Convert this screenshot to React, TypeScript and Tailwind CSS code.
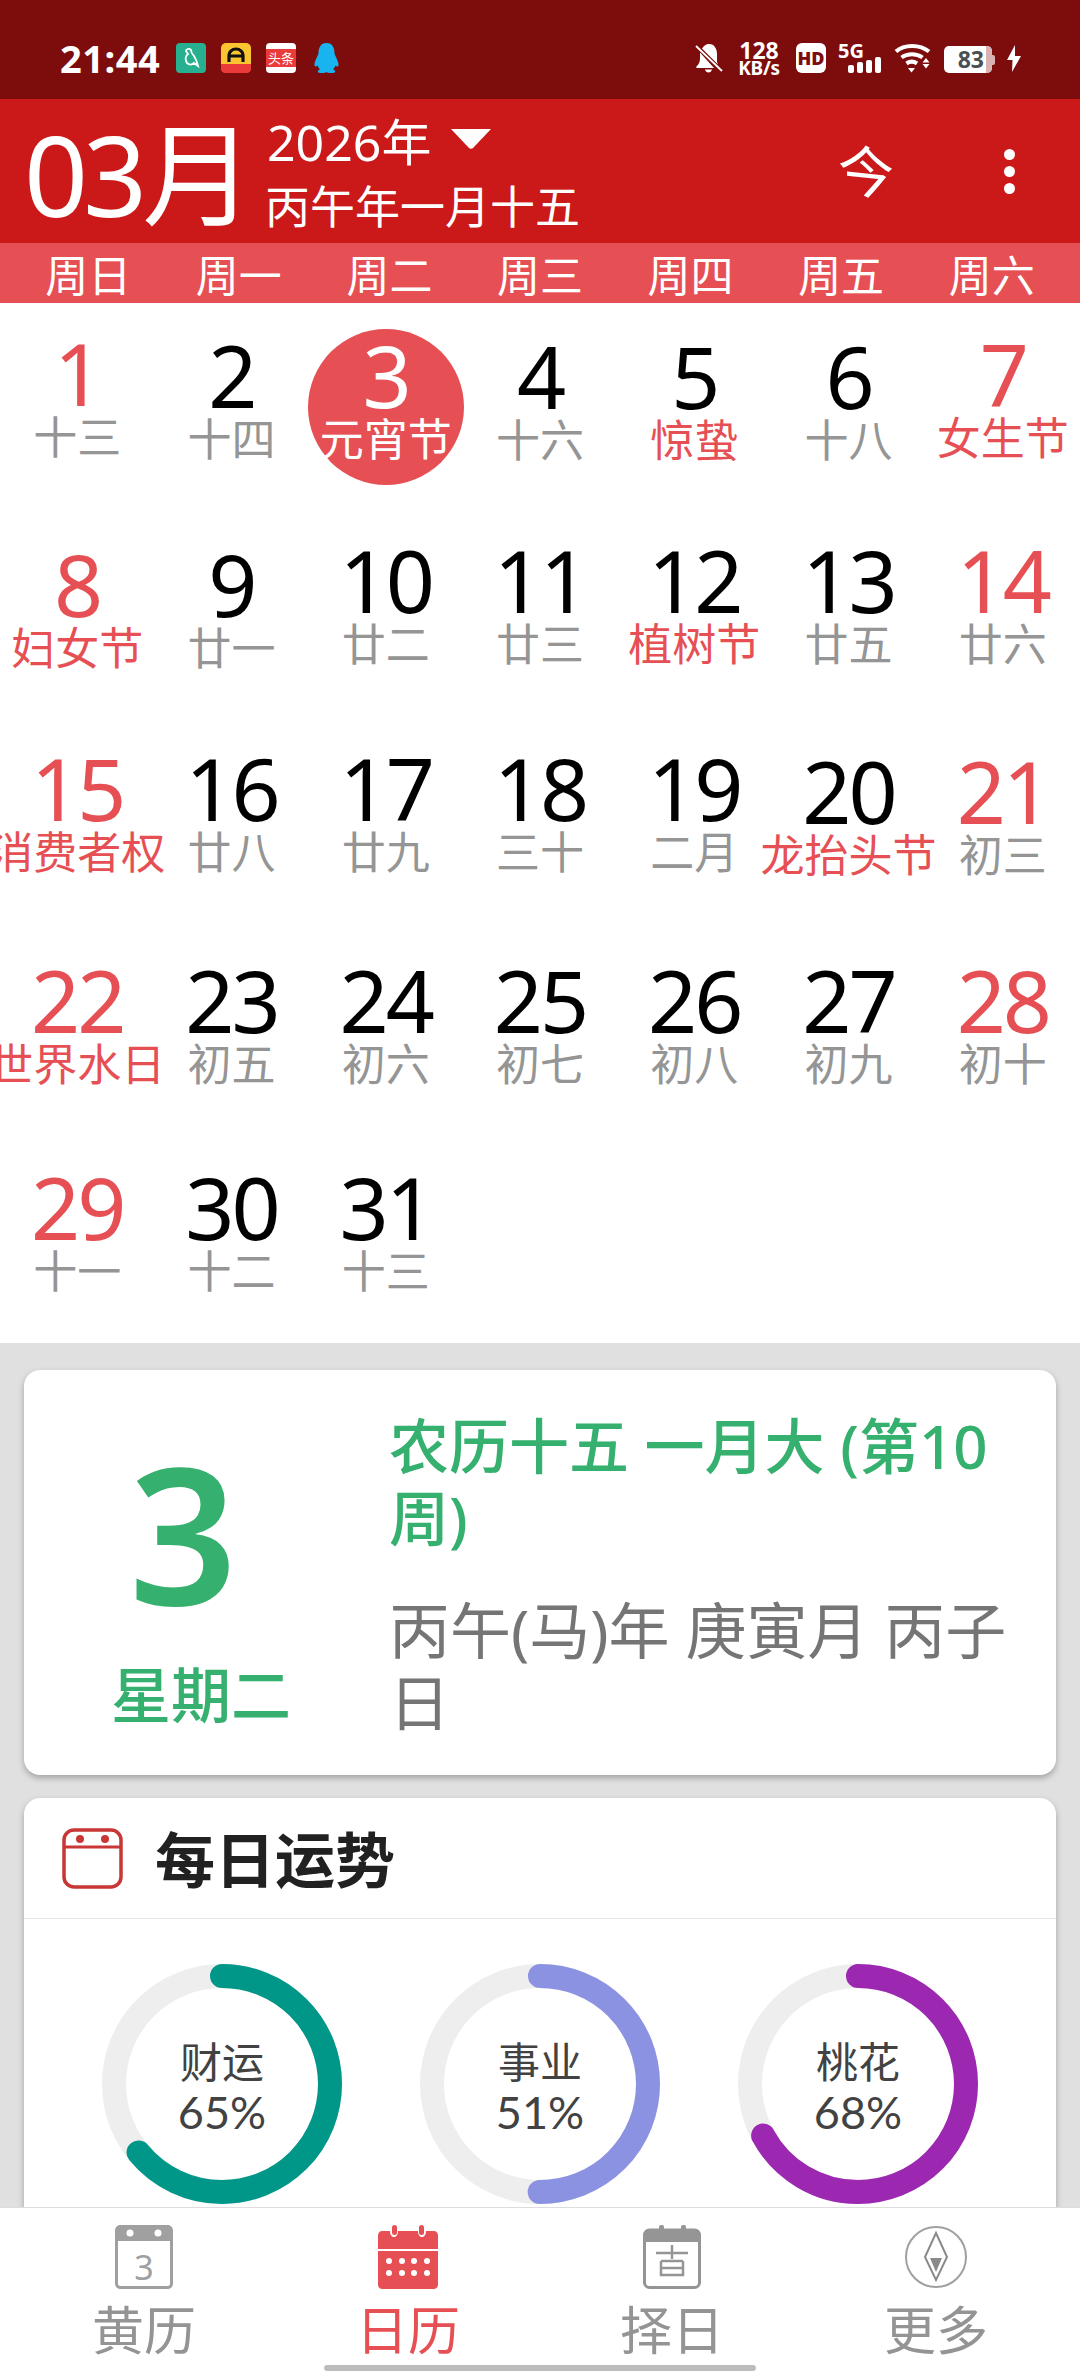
import React from 'react';

type Day = { d: number; l: string; red?: boolean; fest?: boolean; today?: boolean; pt: string };

const days: Day[] = [
  { d: 1, l: '十三', red: true, pt: 'pt-[32px]' },
  { d: 2, l: '十四', pt: 'pt-[34px]' },
  { d: 3, l: '元宵节', today: true, pt: 'pt-[34px]' },
  { d: 4, l: '十六', pt: 'pt-[35px]' },
  { d: 5, l: '惊蛰', fest: true, pt: 'pt-[35px]' },
  { d: 6, l: '十八', pt: 'pt-[35px]' },
  { d: 7, l: '女生节', red: true, fest: true, pt: 'pt-[33px]' },
  { d: 8, l: '妇女节', red: true, fest: true, pt: 'pt-[35px]' },
  { d: 9, l: '廿一', pt: 'pt-[35px]' },
  { d: 10, l: '廿二', pt: 'pt-[31px]' },
  { d: 11, l: '廿三', pt: 'pt-[31px]' },
  { d: 12, l: '植树节', fest: true, pt: 'pt-[31px]' },
  { d: 13, l: '廿五', pt: 'pt-[31px]' },
  { d: 14, l: '廿六', red: true, pt: 'pt-[31px]' },
  { d: 15, l: '消费者权', red: true, fest: true, pt: 'pt-[31px]' },
  { d: 16, l: '廿八', pt: 'pt-[31px]' },
  { d: 17, l: '廿九', pt: 'pt-[31px]' },
  { d: 18, l: '三十', pt: 'pt-[31px]' },
  { d: 19, l: '二月', pt: 'pt-[31px]' },
  { d: 20, l: '龙抬头节', fest: true, pt: 'pt-[34px]' },
  { d: 21, l: '初三', red: true, pt: 'pt-[34px]' },
  { d: 22, l: '世界水日', red: true, fest: true, pt: 'pt-[35px]' },
  { d: 23, l: '初五', pt: 'pt-[35px]' },
  { d: 24, l: '初六', pt: 'pt-[35px]' },
  { d: 25, l: '初七', pt: 'pt-[35px]' },
  { d: 26, l: '初八', pt: 'pt-[35px]' },
  { d: 27, l: '初九', pt: 'pt-[35px]' },
  { d: 28, l: '初十', red: true, pt: 'pt-[35px]' },
  { d: 29, l: '十一', red: true, pt: 'pt-[34px]' },
  { d: 30, l: '十二', pt: 'pt-[34px]' },
  { d: 31, l: '十三', pt: 'pt-[34px]' },
];

const weekdays = ['周日', '周一', '周二', '周三', '周四', '周五', '周六'];

const rings = [
  { name: '财运', pct: 65, color: '#009688' },
  { name: '事业', pct: 51, color: '#8c92e2' },
  { name: '桃花', pct: 68, color: '#9c27b0' },
];

const StatusBar = () => (
  <div className="h-[99px] bg-[#7d0d0d] flex items-center text-white pt-[17px] shrink-0">
    <div className="ml-[60px] text-[38px] font-bold leading-none tracking-[0.5px] w-[116px]">21:44</div>
    <div className="flex items-center gap-[15px]">
      <svg width="30" height="30" viewBox="0 0 30 30">
        <rect width="30" height="30" rx="4" fill="#26b08f" />
        <path d="M10 8c0-2 3-3 5-1 0 3 1 4 3 6 2 3 3 6 4 10l-4-3c-2 2-5 2-7 0-2-3-2-7 1-9z" fill="none" stroke="#fff" strokeWidth="1.800" />
      </svg>
      <svg width="30" height="30" viewBox="0 0 30 30">
        <rect width="30" height="30" rx="5" fill="#fbc531" />
        <path d="M0 21h30v4c0 3-2 5-5 5H5c-3 0-5-2-5-5z" fill="#ea3a3a" />
        <path d="M8 19v-7c0-3 3-6 7-6s7 3 7 6v7M8 13h14" fill="none" stroke="#111" strokeWidth="3.200" />
      </svg>
      <div className="w-[30px] h-[30px] rounded-[4px] bg-white flex items-center overflow-hidden">
        <div className="w-full h-[18px] bg-[#ea3a3a] text-white text-[13px] leading-[18px] text-center whitespace-nowrap">头条</div>
      </div>
      <svg className="ml-[2px]" width="27" height="30" viewBox="0 0 27 30">
        <path d="M13.500 0C7.500 0 5.500 5 5.500 10c0 2-3.500 7-4 11-.3 3 1.500 3 3 1.500.5 1.500 1.500 3 2.500 3.800-1.500.7-2.500 1.500-2 2.700 1 1.500 7 1.200 8.500 0 1.500 1.200 7.500 1.500 8.500 0 .5-1.200-.5-2-2-2.700 1-.8 2-2.300 2.500-3.800 1.500 1.500 3.300 1.500 3-1.500-.5-4-4-9-4-11 0-5-2-10-8-10z" fill="#18b4f0" />
      </svg>
    </div>

    <div className="ml-auto mr-[59px] flex items-center">
      <svg width="28" height="30" viewBox="0 0 28 30" fill="#fff">
        <path d="M7 5.500C8.800 2.800 11 1 14 1c5.500 0 8 5 8 10v8l1 2.500zM5 9.500 19 25H2c-1 0-1-1-.5-1.500C4 21 5 19 5 15zM10 26.500h7c-.5 2-2 3-3.500 3s-3-1-3.500-3z" />
        <path d="M1 3 27 28" stroke="#fff" strokeWidth="1.800" />
      </svg>
      <div className="w-[44px] ml-[14px] flex flex-col items-center font-bold">
        <div className="text-[23px] leading-[20px]">128</div>
        <div className="text-[19px] leading-[17px] tracking-[-0.3px] whitespace-nowrap">KB/s</div>
      </div>
      <div className="ml-[15px] w-[30px] h-[30px] rounded-[6px] bg-white flex items-center justify-center text-[#7d0d0d] text-[18px] font-black leading-none">HD</div>
      <div className="ml-[12px] w-[45px] h-[30px] relative">
        <div className="absolute left-0 top-0 text-[20px] leading-[16px] font-bold">5G</div>
        <div className="absolute left-[10px] bottom-0 flex items-end gap-[3px]">
          <div className="w-[6px] h-[8px] rounded-[2px] bg-white" />
          <div className="w-[6px] h-[11px] rounded-[2px] bg-white" />
          <div className="w-[6px] h-[13px] rounded-[2px] bg-white" />
          <div className="w-[6px] h-[16px] rounded-[2px] bg-white" />
        </div>
      </div>
      <svg className="ml-[11px]" width="38" height="30" viewBox="0 0 38 30" fill="none" stroke="#fff" strokeWidth="4">
        <path d="M2 8.500C10 1 26 1 35 8.500" />
        <path d="M7.500 14.500c6-4.500 15-4.500 21 0" />
        <path d="M12.500 20.500c3.500-2.500 7-2.500 10.500 0" />
        <path d="M14 25h7l-3.500 4.500z" fill="#fff" stroke="none" />
        <path d="M32 15l3.500 4.500h-7zM28.500 21h7L32 25.500z" fill="#fff" stroke="none" />
      </svg>
      <div className="ml-[12px] w-[51px] h-[27px] mt-[3px] flex items-center">
        <div className="w-[48px] h-[27px] rounded-[5px] overflow-hidden flex bg-white">
          <div className="w-[40px] text-[#4a4f52] text-[23px] font-bold leading-[27px] text-right">83</div>
          <div className="w-[6px] ml-auto bg-[#d9b3b3]" />
        </div>
        <div className="w-[3px] h-[10px] bg-[#d9b3b3] rounded-r-[2px]" />
      </div>
      <svg className="ml-[12px]" width="14" height="27" viewBox="0 0 14 27" fill="#fff">
        <path d="M8 0 0 15h5.500L5 27l9-16H8z" />
      </svg>
    </div>
  </div>
);

const Header = () => (
  <div className="h-[144px] bg-[#cb1818] flex items-center text-white shrink-0">
    <div className="ml-[24px] w-[243px] text-[112px] leading-none whitespace-nowrap tracking-[-5px] pt-[5px]">03月</div>
    <div className="flex flex-col pt-[7px]">
      <div className="flex items-center h-[56px]">
        <span className="text-[50px] leading-none">2026年</span>
        <svg className="ml-[20px] mb-[6px]" width="40" height="20" viewBox="0 0 40 20">
          <path d="M0 0h40L22 19c-1 1-3 1-4 0z" fill="#fff" />
        </svg>
      </div>
      <div className="text-[45px] leading-[58px] whitespace-nowrap pt-[8px] -ml-[2px]">丙午年一月十五</div>
    </div>
    <div className="ml-auto mr-[65px] flex items-center">
      <span className="text-[56px] leading-none mr-[110px] skew-y-[6deg]">今</span>
      <div className="flex flex-col gap-[6px]">
        <div className="w-[11px] h-[11px] rounded-full bg-white" />
        <div className="w-[11px] h-[11px] rounded-full bg-white" />
        <div className="w-[11px] h-[11px] rounded-full bg-white" />
      </div>
    </div>
  </div>
);

const WeekRow = () => (
  <div className="h-[60px] bg-[#e65054] grid grid-cols-7 px-[13px] text-white text-[43px] leading-[66px] text-center shrink-0">
    {weekdays.map((w) => (
      <div key={w} className="h-[60px]">{w}</div>
    ))}
  </div>
);

const Cell = ({ day }: { day: Day }) => {
  const numColor = day.today ? 'text-white' : day.red ? 'text-[#e65054]' : 'text-black';
  const lunarColor = day.today ? 'text-white' : day.fest ? 'text-[#e65054]' : 'text-[#959595]';
  return (
    <div className={`h-[208px] relative flex flex-col items-center ${day.pt}`}>
      {day.today && <div className="absolute left-[-1px] top-[26px] w-[156px] h-[156px] rounded-full bg-[#e65054]" />}
      <div className={`relative text-[86px] leading-[76px] tracking-[-3px] ${numColor}`}>{day.d}</div>
      <div className={`relative text-[44px] leading-[40px] mt-[6px] whitespace-nowrap ${lunarColor}`}>{day.l}</div>
    </div>
  );
};

const Ring = ({ name, pct, color }: { name: string; pct: number; color: string }) => {
  const r = 108;
  const c = 2 * Math.PI * r;
  // the arc in the app stops a bit short of its label value
  const sweep = ((pct - 1) / 100) * c;
  return (
    <div className="relative w-[240px] h-[240px] mx-auto">
      <svg width="240" height="240" viewBox="0 0 240 240">
        <circle cx="120" cy="120" r={r} fill="none" stroke="#eeeeee" strokeWidth="24" />
        <circle
          cx="120"
          cy="120"
          r={r}
          fill="none"
          stroke={color}
          strokeWidth="24"
          strokeLinecap="round"
          strokeDasharray={`${sweep} ${c}`}
          transform="rotate(-90 120 120)"
        />
      </svg>
      <div className="absolute inset-0 flex flex-col items-center justify-center pt-[5px] text-[#424242]">
        <div className="text-[42px] leading-[51px]">{name}</div>
        <div className="text-[45px] leading-[51px] font-['Lato','Noto_Sans',sans-serif]">{pct}%</div>
      </div>
    </div>
  );
};

const Cards = () => (
  <div className="flex-1 bg-[#e0e0e0] overflow-hidden px-[24px] pt-[27px] min-h-0">
    <div className="h-[405px] bg-white rounded-[16px] shadow-[0_3px_6px_rgba(0,0,0,0.28)] flex">
      <div className="w-[354px] shrink-0 flex flex-col items-center pt-[62px]">
        <div className="text-[190px] leading-[200px] font-semibold text-[#35b06e] mr-[36px]">3</div>
        <div className="text-[60px] leading-[72px] font-medium text-[#35b06e] mt-[27px]">星期二</div>
      </div>
      <div className="ml-[11px] w-[640px] pt-[40px]">
        <div className="text-[60px] leading-[72px] font-medium text-[#35b06e]">农历十五 一月大 (第10周)</div>
        <div className="text-[61px] leading-[72px] text-[#757575] mt-[41px]">丙午(马)年 庚寅月 丙子日</div>
      </div>
    </div>
    <div className="mt-[23px] bg-white rounded-t-[16px] shadow-[0_3px_6px_rgba(0,0,0,0.28)] h-[500px]">
      <div className="h-[121px] flex items-center border-b border-[#e8e8e8] pl-[38px]">
        <svg width="61" height="61" viewBox="0 0 61 61" fill="none">
          <rect x="2" y="2" width="57" height="57" rx="10" stroke="#c93636" strokeWidth="3.500" />
          <path d="M2 19h57" stroke="#c93636" strokeWidth="3" />
          <circle cx="18" cy="11" r="4" fill="#c93636" />
          <circle cx="43" cy="11" r="4" fill="#c93636" />
        </svg>
        <span className="ml-[32px] mt-[4px] text-[60px] leading-none font-bold text-[#212121]">每日运势</span>
      </div>
      <div className="grid grid-cols-3 px-[39px] pt-[45px]">
        {rings.map((r) => (
          <Ring key={r.name} {...r} />
        ))}
      </div>
    </div>
  </div>
);

const BottomNav = () => (
  <div className="h-[169px] bg-white border-t border-[#dddddd] grid grid-cols-4 px-[12px] relative shrink-0">
    <div className="flex flex-col items-center pt-[17px] text-[#949494]">
      <svg width="58" height="64" viewBox="0 0 58 64" fill="none">
        <rect x="1.500" y="1.500" width="55" height="61" rx="4" stroke="#a0a0a0" strokeWidth="3" />
        <path d="M1 5c0-3 2-5 5-5h46c3 0 5 2 5 5v11H1z" fill="#a0a0a0" />
        <circle cx="15" cy="8" r="3.500" fill="#fff" />
        <circle cx="43" cy="8" r="3.500" fill="#fff" />
        <text x="29" y="55" textAnchor="middle" fontSize="34" fill="#a0a0a0">3</text>
      </svg>
      <div className="text-[52px] leading-[70px] mt-[6px]">黄历</div>
    </div>
    <div className="flex flex-col items-center pt-[17px] text-[#e65054]">
      <svg width="60" height="64" viewBox="0 0 60 64">
        <path d="M0 10c0-2 2-4 4-4h8c0 8 8 8 8 0h20c0 8 8 8 8 0h8c2 0 4 2 4 4v14H0zM0 26h60v34c0 2-2 4-4 4H4c-2 0-4-2-4-4z" fill="#e65054" />
        <rect x="14" y="0" width="5" height="10" rx="2.500" fill="#e65054" />
        <rect x="41" y="0" width="5" height="10" rx="2.500" fill="#e65054" />
        {[11, 24, 36, 49].map((x) => (
          <React.Fragment key={x}>
            <circle cx={x} cy="36" r="3" fill="#fff" />
            <circle cx={x} cy="48" r="3" fill="#fff" />
          </React.Fragment>
        ))}
      </svg>
      <div className="text-[52px] leading-[70px] mt-[6px]">日历</div>
    </div>
    <div className="flex flex-col items-center pt-[17px] text-[#949494]">
      <svg width="58" height="64" viewBox="0 0 58 64" fill="none">
        <rect x="1.500" y="5" width="55" height="57.500" rx="5" stroke="#959595" strokeWidth="3" />
        <path d="M1 9c0-3 2-5 5-5h46c3 0 5 2 5 5v8H1z" fill="#959595" />
        <rect x="16" y="0" width="5" height="8" rx="2" fill="#959595" />
        <rect x="38" y="0" width="5" height="8" rx="2" fill="#959595" />
        <path d="M13 28h32M29 20v14M18 36h22M18 36v14h22V36M18 43h22" stroke="#959595" strokeWidth="2.500" />
      </svg>
      <div className="text-[52px] leading-[70px] mt-[6px]">择日</div>
    </div>
    <div className="flex flex-col items-center pt-[17px] text-[#949494]">
      <svg width="62" height="64" viewBox="0 0 62 64" fill="none">
        <circle cx="31" cy="32" r="30" stroke="#a0a0a0" strokeWidth="2" />
        <path d="M31 8l11 24-11 23-11-23z" stroke="#8a8a8a" strokeWidth="2" />
        <path d="M25 33h12l-6 14z" fill="#8a8a8a" />
      </svg>
      <div className="text-[52px] leading-[70px] mt-[6px]">更多</div>
    </div>
    <div className="absolute left-[324px] bottom-[5px] w-[432px] h-[6px] rounded-full bg-[#bdbdbd]" />
  </div>
);

const App = () => {
  return (
    <div className="w-[1080px] h-[2376px] overflow-hidden bg-white flex flex-col font-['Noto_Sans','Noto_Sans_CJK_SC',sans-serif]">
      <StatusBar />
      <Header />
      <WeekRow />
      <div className="grid grid-cols-7 h-[1040px] shrink-0 bg-white">
        {days.map((d) => (
          <Cell key={d.d} day={d} />
        ))}
      </div>
      <Cards />
      <BottomNav />
    </div>
  );
};

export default App;
